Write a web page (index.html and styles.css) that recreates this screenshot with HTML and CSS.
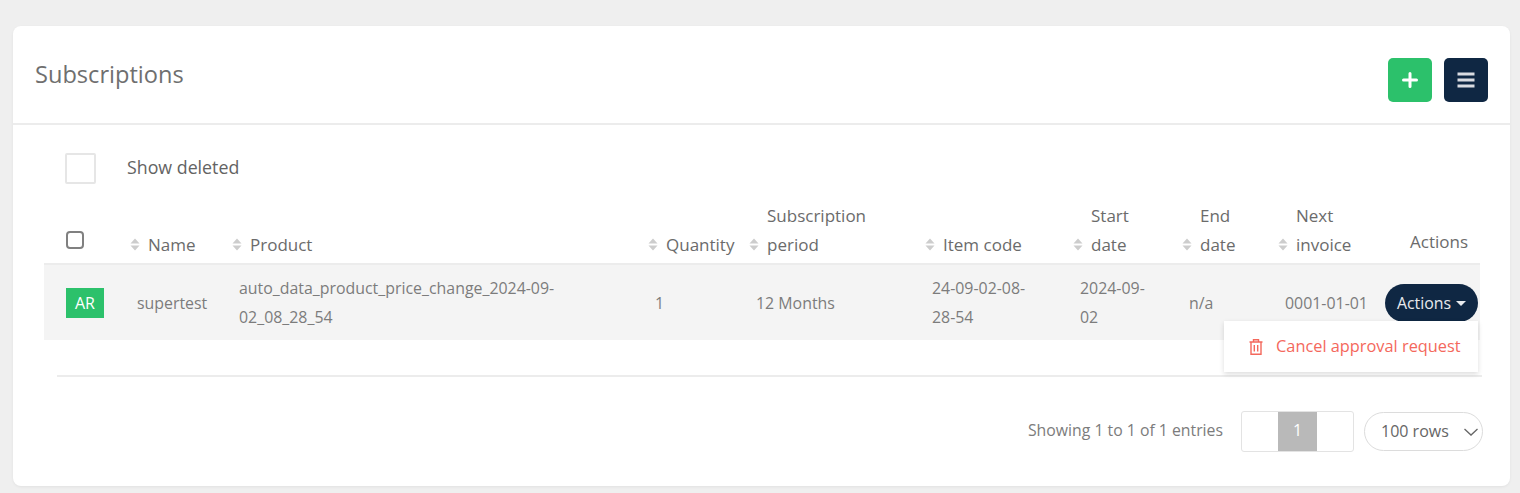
FILE: index.html
```html
<!DOCTYPE html>
<html lang="en">
<head>
<meta charset="utf-8">
<title>Subscriptions</title>
<link rel="stylesheet" href="styles.css">
</head>
<body>
<main class="card">
  <header class="card-head">
    <h1>Subscriptions</h1>
    <div class="head-btns">
      <button class="sq green" aria-label="Add"><svg width="16" height="16" viewBox="0 0 16 16"><path d="M8 1.5v13M1.5 8h13" stroke="#fff" stroke-width="3" stroke-linecap="round"/></svg></button>
      <button class="sq navy" aria-label="Menu"><svg width="18" height="16" viewBox="0 0 18 16"><path d="M.5 2h17M.5 8h17M.5 14h17" stroke="#d9dce1" stroke-width="3"/></svg></button>
    </div>
  </header>
  <div class="card-body">
    <label class="show-deleted"><span class="big-check"></span><span class="show-label">Show deleted</span></label>
    <table class="grid">
      <colgroup>
        <col class="c0"><col class="c1"><col class="c2"><col class="c3"><col class="c4"><col class="c5"><col class="c6"><col class="c7"><col class="c8"><col class="c9">
      </colgroup>
      <thead>
        <tr>
          <th class="check-cell"><span class="small-check"></span></th>
          <th><div class="th-in"><svg class="sort" viewBox="0 0 10 13"><path d="M5 .5l4.500 5H.5zM5 12.500L.5 7.500h9z"/></svg><span>Name</span></div></th>
          <th><div class="th-in"><svg class="sort" viewBox="0 0 10 13"><path d="M5 .5l4.500 5H.5zM5 12.500L.5 7.500h9z"/></svg><span>Product</span></div></th>
          <th><div class="th-in"><svg class="sort" viewBox="0 0 10 13"><path d="M5 .5l4.500 5H.5zM5 12.500L.5 7.500h9z"/></svg><span>Quantity</span></div></th>
          <th><div class="th-in"><svg class="sort" viewBox="0 0 10 13"><path d="M5 .5l4.500 5H.5zM5 12.500L.5 7.500h9z"/></svg><span>Subscription<br>period</span></div></th>
          <th><div class="th-in"><svg class="sort" viewBox="0 0 10 13"><path d="M5 .5l4.500 5H.5zM5 12.500L.5 7.500h9z"/></svg><span>Item code</span></div></th>
          <th><div class="th-in"><svg class="sort" viewBox="0 0 10 13"><path d="M5 .5l4.500 5H.5zM5 12.500L.5 7.500h9z"/></svg><span>Start<br>date</span></div></th>
          <th><div class="th-in"><svg class="sort" viewBox="0 0 10 13"><path d="M5 .5l4.500 5H.5zM5 12.500L.5 7.500h9z"/></svg><span>End<br>date</span></div></th>
          <th><div class="th-in"><svg class="sort" viewBox="0 0 10 13"><path d="M5 .5l4.500 5H.5zM5 12.500L.5 7.500h9z"/></svg><span>Next<br>invoice</span></div></th>
          <th class="th-actions">Actions</th>
        </tr>
      </thead>
      <tbody>
        <tr>
          <td class="badge-cell"><span class="badge">AR</span></td>
          <td>supertest</td>
          <td>auto_data_product_price_change_2024-09-02_08_28_54</td>
          <td>1</td>
          <td>12 Months</td>
          <td>24-09-02-08-28-54</td>
          <td>2024-09-02</td>
          <td>n/a</td>
          <td class="no-wrap">0001-01-01</td>
          <td class="act-cell">
            <button class="actions-btn">Actions<i class="caret"></i></button>
            <div class="menu">
              <svg width="16" height="18" viewBox="0 0 16 18" fill="none" stroke="#f4685c" stroke-width="1.400"><path d="M1.500 4h13M5.500 4V1.700h5V4M3 4v12.300h10V4M6.300 7v6.500M9.700 7v6.500"/></svg>
              <span>Cancel approval request</span>
            </div>
          </td>
        </tr>
      </tbody>
    </table>
    <div class="rule"></div>
    <footer class="pager-row">
      <span class="entries">Showing 1 to 1 of 1 entries</span>
      <div class="pager"><span></span><span class="on">1</span><span></span></div>
      <div class="rows"><span class="rows-label">100 rows</span><svg width="14" height="8" viewBox="0 0 14 8" fill="none" stroke="#666" stroke-width="1.300"><path d="M.5 1l6.500 6 6.500-6"/></svg></div>
    </footer>
  </div>
</main>
</body>
</html>
```
FILE: styles.css
```css
* { box-sizing: border-box; }
html, body { margin: 0; height: 100%; }
body {
  background: #efefef;
  padding: 26px 10px 7px 13px;
  font-family: "Open Sans", "Noto Sans", sans-serif;
  color: #666;
  overflow: hidden;
}
.card {
  height: 460px;
  background: #fff;
  border-radius: 8px;
  box-shadow: 0 1px 3px rgba(0,0,0,.06);
}
.card-head {
  height: 99px;
  border-bottom: 2px solid #ececec;
  display: flex;
  justify-content: space-between;
  padding: 32px 22px 0 22px;
}
h1 {
  margin: -1px 0 0;
  font-size: 23.6px;
  line-height: 34px;
  font-weight: 400;
  color: #6f6f6f;
}
.head-btns { display: flex; gap: 12px; }
.sq {
  width: 44px;
  height: 44px;
  border: 0;
  border-radius: 5px;
  display: flex;
  align-items: center;
  justify-content: center;
  padding: 0;
}
.green { background: #2cc16b; }
.navy { background: #0f2743; }
.card-body { padding: 27px 30px 0 31px; }
.show-deleted {
  display: flex;
  align-items: center;
  gap: 31px;
  font-size: 17.8px;
  height: 32px;
  margin-left: 21px;
  color: #636363;
}
.show-label { padding-bottom: 3px; }
.big-check {
  width: 31px;
  height: 31px;
  border: 2px solid #e6e6e6;
  border-radius: 2px;
  background: #fff;
}
.grid {
  width: 1436px;
  table-layout: fixed;
  border-collapse: collapse;
  margin-top: 17px;
  font-size: 15.900px;
}
.c0 { width: 81px; }
.c1 { width: 102px; }
.c2 { width: 416px; }
.c3 { width: 101px; }
.c4 { width: 176px; }
.c5 { width: 148px; }
.c6 { width: 109px; }
.c7 { width: 96px; }
.c8 { width: 100px; }
.c9 { width: 107px; }
th {
  font-weight: 400;
  text-align: left;
  vertical-align: bottom;
  padding: 0 0 4px 5px;
  line-height: 29px;
  color: #6b6b6b;
  border-bottom: 2px solid #ececec;
  font-size: 17px;
}
.th-in { display: flex; align-items: flex-end; }
.sort {
  width: 10px;
  height: 13px;
  fill: #cdcdcd;
  margin: 0 8px 8px 0;
  flex: none;
}
.check-cell { padding: 0 0 14px 22px; }
.small-check {
  display: block;
  width: 18px;
  height: 18px;
  border: 2px solid #808080;
  border-radius: 4px;
}
.th-actions { padding: 0 0 7px 37px; }
tbody tr { background: #f4f4f4; height: 76px; }
td {
  padding: 1px 20px 0 12px;
  vertical-align: middle;
  line-height: 29px;
  color: #7c7c7c;
}
td.no-wrap { padding-right: 0; white-space: nowrap; }
.badge-cell { padding-left: 22px; }
.badge {
  display: inline-block;
  width: 38px;
  height: 30px;
  line-height: 30px;
  text-align: center;
  background: #2cc16b;
  color: #fff;
  font-size: 16px;
  vertical-align: middle;
}
td.act-cell { position: relative; padding-right: 0; }
.actions-btn {
  width: 93px;
  height: 38px;
  border: 0;
  border-radius: 19px;
  background: #0f2743;
  color: #e8eaee;
  font: inherit;
  padding: 0;
  display: flex;
  align-items: center;
  justify-content: center;
  gap: 5px;
}
.caret {
  width: 0;
  height: 0;
  border: 5px solid transparent;
  border-top-color: #e8eaee;
  border-bottom: 0;
}
.menu {
  position: absolute;
  top: 56px;
  right: 2px;
  width: 254px;
  height: 51px;
  background: #fff;
  box-shadow: 0 2px 5px rgba(0,0,0,.14);
  display: flex;
  align-items: center;
  gap: 12px;
  padding-left: 24px;
  color: #f4685c;
  font-size: 16.350px;
  white-space: nowrap;
  z-index: 2;
}
.rule {
  height: 2px;
  background: #ececec;
  margin: 35px -2px 0 13px;
}
.pager-row {
  display: flex;
  justify-content: flex-end;
  align-items: center;
  gap: 10px;
  margin: 34px -3px 0 0;
  font-size: 16px;
}
.entries { margin-right: 8px; color: #7c7c7c; font-size: 15.800px; padding-bottom: 3px; }
.pager {
  display: flex;
  width: 113px;
  height: 41px;
  border: 1px solid #e3e3e3;
  border-radius: 3px;
}
.pager span { flex: 1; text-align: center; line-height: 37px; }
.pager .on { background: #b9b9b9; color: #fff; flex: 0 0 39px; }
.rows {
  width: 119px;
  height: 39px;
  border: 1px solid #dcdcdc;
  border-radius: 20px;
  display: flex;
  align-items: center;
  justify-content: space-between;
  padding: 0 4px 0 16px;
}
.rows-label { padding-bottom: 2px; }
```
